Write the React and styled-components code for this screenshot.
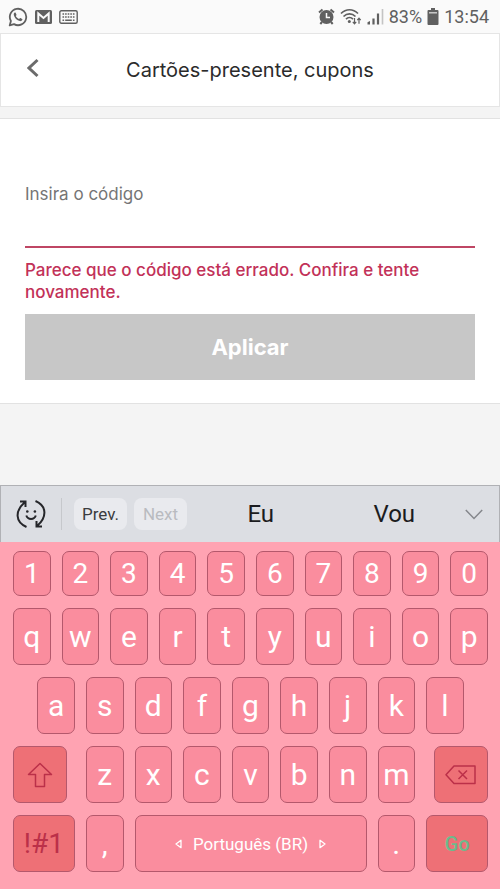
import React from "react";
import styled, { createGlobalStyle } from "styled-components";

const GlobalStyle = createGlobalStyle`
  *, *::before, *::after { box-sizing: border-box; }
  body { margin: 0; background: #f4f4f4; }
  button, input { font: inherit; color: inherit; margin: 0; }
`;

const sans = `Inter, "Liberation Sans", sans-serif`;
const roboto = `Roboto, "Liberation Sans", sans-serif`;

const Screen = styled.div`
  display: flex;
  flex-direction: column;
  min-height: 100vh;
  font-family: ${sans};
  color: #2b2b2b;
`;

const StatusBar = styled.div`
  display: flex;
  align-items: center;
  justify-content: space-between;
  height: 33px;
  padding: 0 11px 0 8px;
  background: #fafafa;
  color: #606060;
  font: 18px/22px ${roboto};
`;

const StatusGroup = styled.div`
  display: flex;
  align-items: center;
  gap: ${(p) => p.$gap}px;
  svg { display: block; flex: none; }
`;

const Header = styled.header`
  display: grid;
  grid-template-columns: 64px 1fr 64px;
  align-items: center;
  height: 74px;
  background: #fff;
  border: 1px solid #e5e5e5;
`;

const BackButton = styled.button`
  display: grid;
  place-items: center;
  height: 48px;
  padding: 0 0 4px;
  border: 0;
  background: none;
  color: #6b6b6b;
`;

const Title = styled.h1`
  margin: 0;
  text-align: center;
  font-size: 20px;
  line-height: 28px;
  font-weight: 400;
`;

const CodeForm = styled.form`
  display: flex;
  flex-direction: column;
  margin-top: 11px;
  padding: 64px 25px 23px;
  background: #fff;
  border-top: 1px solid #e2e2e2;
  border-bottom: 1px solid #e2e2e2;
`;

const Label = styled.label`
  font-size: 17px;
  line-height: 22px;
  color: #757575;
`;

const CodeInput = styled.input`
  width: 100%;
  height: 43px;
  padding: 4px 0;
  border: 0;
  border-bottom: 2px solid #bf4664;
  border-radius: 0;
  background: none;
  outline: none;
  font-size: 17px;
`;

const ErrorText = styled.p`
  margin: 11px 0;
  font-size: 17px;
  line-height: 22px;
  font-weight: 500;
  color: #c23158;
`;

const ApplyButton = styled.button`
  height: 66px;
  border: 0;
  background: #c7c7c7;
  color: #fff;
  font-size: 22px;
  font-weight: 700;
`;

const Keyboard = styled.section`
  margin-top: auto;
  font-family: ${roboto};
`;

const SuggestionBar = styled.div`
  display: flex;
  align-items: center;
  height: 57px;
  padding: 0 12px 0 15px;
  background: #dcdee3;
  border: 1px solid #b0b1b5;
  border-bottom: 0;
`;

const ToolButton = styled.button`
  display: grid;
  place-items: center;
  width: ${(p) => p.$width}px;
  height: 40px;
  padding: 0;
  border: 0;
  background: none;
  color: ${(p) => p.$color};
`;

const Divider = styled.span`
  width: 1px;
  height: 32px;
  margin: 0 12px 0 15px;
  background: #c6c8cc;
`;

const Chip = styled.button`
  width: 53px;
  height: 32px;
  margin-right: 7px;
  padding: 0;
  border: 0;
  border-radius: 8px;
  background: #e9eaee;
  color: #3b3c40;
  font-size: 17px;
  &:disabled { color: #b9bbc0; }
`;

const Suggestion = styled.button`
  flex: 1;
  height: 48px;
  padding: 0;
  border: 0;
  background: none;
  color: #1b1c20;
  font-size: 24px;
`;

const Keys = styled.div`
  display: grid;
  grid-template-columns: repeat(20, minmax(0, 1fr));
  grid-template-rows: 45px repeat(4, 57px);
  gap: 12px 11px;
  padding: 9px 12px 17px 13px;
  background: #ffa3b2;
`;

const Key = styled.button`
  grid-column: ${(p) => (p.$start ? `${p.$start} / span ${p.$span || 2}` : `span ${p.$span || 2}`)};
  display: flex;
  align-items: center;
  justify-content: center;
  gap: 11px;
  padding: 0;
  border: 1px solid #b4586c;
  border-radius: 7px;
  background: #fa8d9e;
  color: #fff;
  font-size: ${(p) => p.$size || 30}px;
`;

const ActionKey = styled(Key)`
  width: ${(p) => (p.$side ? "88%" : "100%")};
  justify-self: ${(p) => p.$side || "stretch"};
  background: #ee7076;
  color: ${(p) => p.$color || "#bb3049"};
  font-weight: ${(p) => p.$weight || 400};
`;

const Icon = ({ w, h, box, children, ...rest }) => (
  <svg width={w} height={h} viewBox={box || `0 0 ${w} ${h}`} fill="none" stroke="currentColor" aria-hidden="true" {...rest}>
    {children}
  </svg>
);

const WhatsAppIcon = () => (
  <Icon w={20} h={20} strokeWidth="1.8">
    <path d="M1.7 18.4 2.9 14A8.2 8.2 0 1 1 6 17.1Z" strokeLinejoin="round" />
    <path d="M6.7 5.6c-.7.5-1.1 1.3-.9 2.3.6 2.9 3.2 5.4 6 6.2 1.1.2 2.2-.3 2.6-1.3.1-.4 0-.7-.3-.9l-1.6-.8c-.3-.1-.5 0-.7.2l-.7.8c-1.5-.6-2.6-1.7-3.3-3l.6-.9c.1-.2.1-.4 0-.6l-.7-1.7c-.2-.4-.6-.5-1-.3Z" fill="currentColor" stroke="none" />
  </Icon>
);

const MailIcon = () => (
  <Icon w={17} h={14}>
    <rect width="17" height="14" rx="1.5" fill="currentColor" stroke="none" />
    <path d="M3.3 12V3.5L8.5 8l5.2-4.5V12" stroke="#fafafa" strokeWidth="2" />
  </Icon>
);

const KeyboardIcon = () => (
  <Icon w={19} h={14}>
    <rect x=".8" y=".8" width="17.4" height="12.4" rx="1.5" strokeWidth="1.4" />
    <path d="M3.5 4h12M3.5 7h12" strokeWidth="1.6" strokeDasharray="1.6 1" />
    <path d="M3.5 10.3h1.6M6.2 10.3h6.6M13.9 10.3h1.6" strokeWidth="1.5" />
  </Icon>
);

const AlarmIcon = () => (
  <Icon w={17} h={17}>
    <circle cx="8.5" cy="9" r="7" fill="currentColor" stroke="none" />
    <path d="M1 4.500 4.500 1.500M16 4.500 12.500 1.500M4 14l-1.700 2M13 14l1.700 2" strokeWidth="2" />
    <path d="M8.5 5v4.500H12" stroke="#fafafa" strokeWidth="1.5" />
  </Icon>
);

const WifiIcon = () => (
  <Icon w={22} h={17}>
    <path d="M1 5.5C6 .5 13 .5 18 5.500M3.500 8.500c3.500-3.500 8.500-3.500 12 0M6 11.200c2-2 5-2 7 0" strokeWidth="1.7" />
    <circle cx="9.3" cy="13.5" r="1.5" fill="currentColor" stroke="none" />
    <path d="M14.5 10v5.500M12.800 13.800l1.700 2 1.700-2M19 15.800v-5.500M17.300 12.200l1.700-2 1.700 2" strokeWidth="1.2" />
  </Icon>
);

const SignalIcon = () => (
  <Icon w={17} h={17}>
    <path d="M.5 16.500v-2.200L3 13v3.500Z" fill="currentColor" stroke="none" />
    <path d="M6.5 16.500v-6M11 16.500v-11" strokeWidth="2.2" />
    <path d="M15.5 16.500V1" stroke="#c4c4c4" strokeWidth="1.6" />
  </Icon>
);

const BatteryIcon = () => (
  <Icon w={12} h={17}>
    <path d="M4 0h4v2h2.500q1 0 1 1v13q0 1-1 1h-9q-1 0-1-1V3q0-1 1-1H4Z" fill="currentColor" stroke="none" />
    <path d="M2 4.800h8" stroke="#d8d8d8" strokeWidth="1.3" />
  </Icon>
);

const BackIcon = () => (
  <Icon w={12} h={20}>
    <path d="M10.5 2 2 10l8.500 8" strokeWidth="3" />
  </Icon>
);

const EmojiSwitchIcon = () => (
  <Icon w={30} h={30} strokeWidth="2">
    <path d="M10.500 28C-1 23 -1 12 8.500 3.500M4 2.500H9.500V8" />
    <path d="M19.500 2C31 7 31 18 21.500 26.500M26 27.500H20.500V22" />
    <path d="M10.300 16.500c1.500 4.600 8 4.600 9.500 0" />
    <circle cx="11.3" cy="12.5" r="1.3" fill="currentColor" stroke="none" />
    <circle cx="18.9" cy="12.5" r="1.3" fill="currentColor" stroke="none" />
  </Icon>
);

const CollapseIcon = () => (
  <Icon w={18} h={11}>
    <path d="m.8 1 8.200 8.500L17.200 1" strokeWidth="1.5" />
  </Icon>
);

const ShiftIcon = () => (
  <Icon w={26} h={26}>
    <path d="M13 1.500 24.500 12.500H17.500V24.500H8.500V12.500H1.500Z" strokeWidth="1.5" strokeLinejoin="round" />
  </Icon>
);

const DeleteIcon = () => (
  <Icon w={31} h={20} strokeWidth="1.5">
    <path d="M9 1H30V18.500H9L1 9.800Z" strokeLinejoin="round" />
    <path d="m13.500 5.500 8.500 8.500M22 5.500 13.500 14" />
  </Icon>
);

const Arrow = ({ right }) => (
  <Icon w={7} h={10} strokeWidth="1.3">
    <path d={right ? "M1 1.300v7.400L6 5Z" : "M6 1.300v7.400L1 5Z"} strokeLinejoin="round" />
  </Icon>
);

const letterKeys = (letters, start) =>
  [...letters].map((c, i) => (
    <Key type="button" key={c} $start={i === 0 ? start : undefined}>{c}</Key>
  ));

export default function App() {
  return (
    <Screen>
      <GlobalStyle />
      <StatusBar>
        <StatusGroup $gap={7}>
          <WhatsAppIcon />
          <MailIcon />
          <KeyboardIcon />
        </StatusGroup>
        <StatusGroup $gap={5}>
          <AlarmIcon />
          <WifiIcon />
          <SignalIcon />
          <span>83%</span>
          <BatteryIcon />
          <span>13:54</span>
        </StatusGroup>
      </StatusBar>

      <Header>
        <BackButton type="button" aria-label="Voltar"><BackIcon /></BackButton>
        <Title>Cartões-presente, cupons</Title>
      </Header>

      <CodeForm onSubmit={(e) => e.preventDefault()}>
        <Label htmlFor="code">Insira o código</Label>
        <CodeInput id="code" type="text" aria-invalid="true" aria-describedby="code-error" />
        <ErrorText id="code-error">
          Parece que o código está errado. Confira e tente novamente.
        </ErrorText>
        <ApplyButton type="submit">Aplicar</ApplyButton>
      </CodeForm>

      <Keyboard aria-label="Teclado">
        <SuggestionBar>
          <ToolButton type="button" aria-label="Emoji" $width={30} $color="#25262a"><EmojiSwitchIcon /></ToolButton>
          <Divider />
          <Chip type="button">Prev.</Chip>
          <Chip type="button" disabled>Next</Chip>
          <Suggestion type="button">Eu</Suggestion>
          <Suggestion type="button">Vou</Suggestion>
          <ToolButton type="button" aria-label="Recolher" $width={26} $color="#85878c"><CollapseIcon /></ToolButton>
        </SuggestionBar>
        <Keys>
          {[..."1234567890"].map((n) => (
            <Key type="button" key={n} $size={28}>{n}</Key>
          ))}
          {letterKeys("qwertyuiop")}
          {letterKeys("asdfghjkl", 2)}
          <ActionKey type="button" $start={1} $span={3} $side="start" aria-label="Shift"><ShiftIcon /></ActionKey>
          {letterKeys("zxcvbnm")}
          <ActionKey type="button" $span={3} $side="end" aria-label="Apagar"><DeleteIcon /></ActionKey>
          <ActionKey type="button" $span={3} $size={28}>!#1</ActionKey>
          <Key type="button">,</Key>
          <Key type="button" $span={10} $size={17}>
            <Arrow />
            <span>Português (BR)</span>
            <Arrow right />
          </Key>
          <Key type="button">.</Key>
          <ActionKey type="button" $span={3} $size={20} $color="#6dba8c" $weight={500}>Go</ActionKey>
        </Keys>
      </Keyboard>
    </Screen>
  );
}
